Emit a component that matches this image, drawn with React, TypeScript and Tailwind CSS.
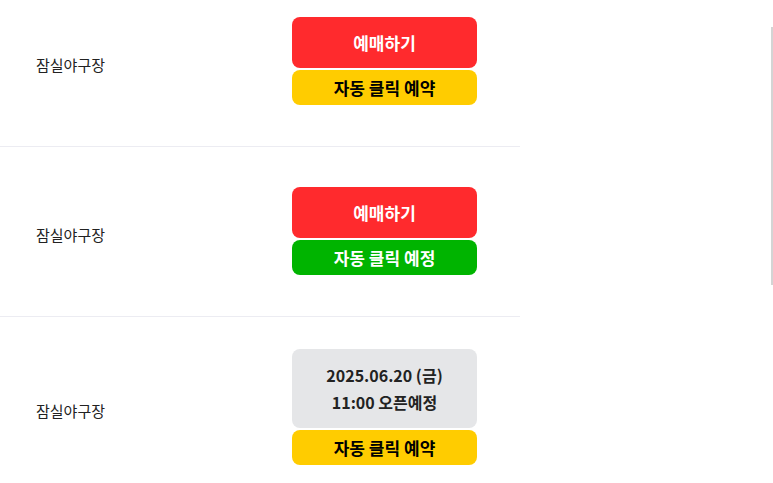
import React from "react";

const font = { fontFamily: '"Noto Sans CJK KR", "Noto Sans", sans-serif' };

function Row({ children, last }: { children: React.ReactNode; last?: boolean }) {
  return (
    <div
      className={
        "grid grid-cols-[256px_185px] items-center pl-[36px] pt-[32px] pb-[33px] min-h-[170px] " +
        (last ? "" : "border-b border-[#ececf2]")
      }
    >
      <div className="pt-[7px] text-[15px] text-[#222] leading-none">잠실야구장</div>
      <div className="flex flex-col gap-[2px]">{children}</div>
    </div>
  );
}

function Red() {
  return (
    <div className="h-[51px] rounded-lg bg-[#ff2a2d] text-white font-bold text-[17px] flex items-center justify-center">
      예매하기
    </div>
  );
}

function Auto({ color, text, textColor }: { color: string; text: string; textColor: string }) {
  return (
    <div
      className={
        "h-[35px] rounded-lg font-bold text-[17px] flex items-center justify-center " + color + " " + textColor
      }
    >
      {text}
    </div>
  );
}

export default function App() {
  return (
    <div className="relative w-[773px] h-[483px] overflow-hidden bg-white" style={font}>
      <div className="w-[520px] -mt-[23px]">
        <Row>
          <Red />
          <Auto color="bg-[#ffcc00]" textColor="text-black" text="자동 클릭 예약" />
        </Row>
        <Row>
          <Red />
          <Auto color="bg-[#00b400]" textColor="text-white" text="자동 클릭 예정" />
        </Row>
        <Row last>
          <div className="h-[79px] pt-[1px] rounded-lg bg-[#e5e6e8] text-[#222] font-bold text-[16px] flex flex-col items-center justify-center leading-[27px]">
            <div>2025.06.20 (금)</div>
            <div>11:00 오픈예정</div>
          </div>
          <Auto color="bg-[#ffcc00]" textColor="text-black" text="자동 클릭 예약" />
        </Row>
      </div>
      <div className="absolute left-[771px] top-[27px] w-[2px] h-[258px] bg-[#d4d4d4]" />
    </div>
  );
}
